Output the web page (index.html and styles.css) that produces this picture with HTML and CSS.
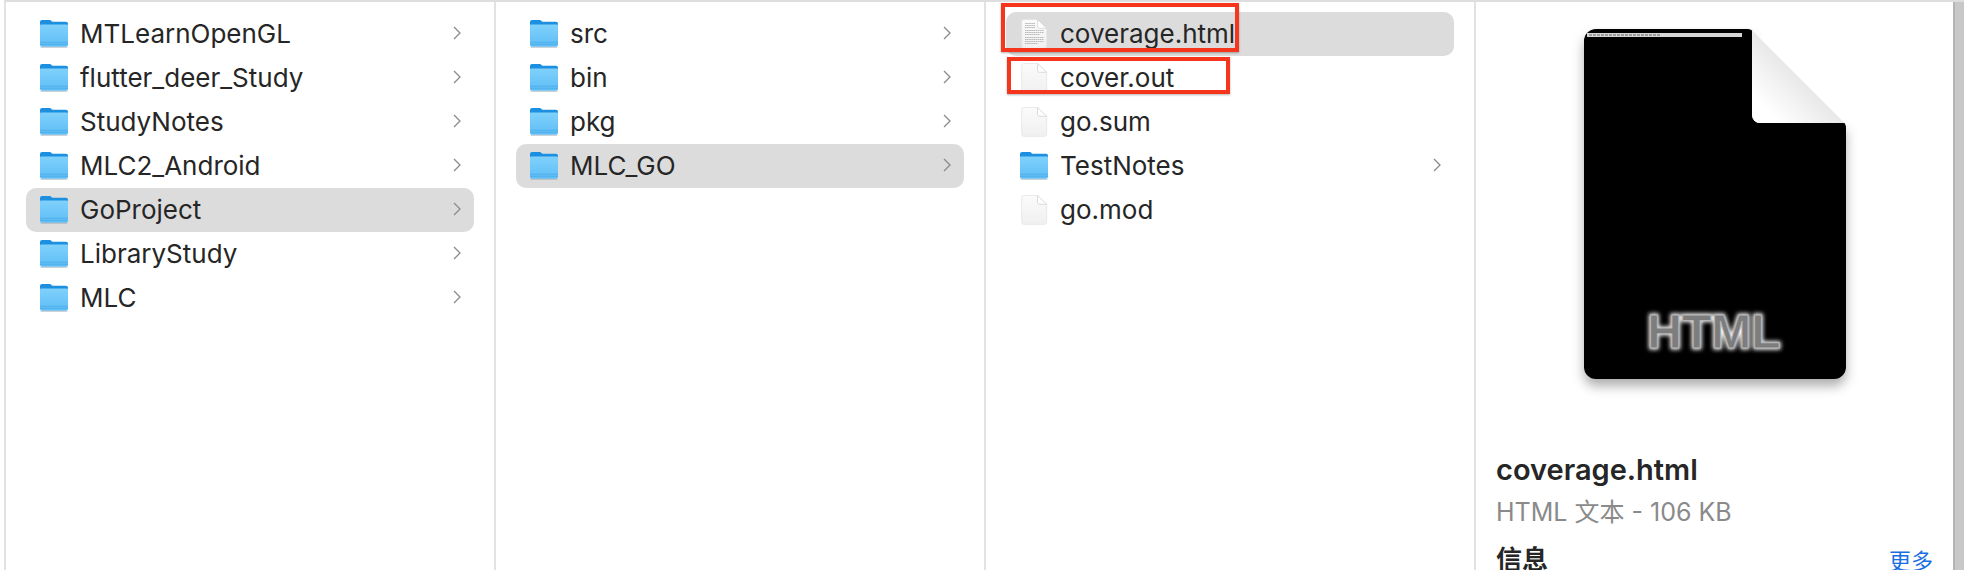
FILE: index.html
```html
<!DOCTYPE html>
<html lang="zh">
<head>
  <meta charset="UTF-8">
  <title>Finder</title>
  <link rel="stylesheet" href="styles.css">
</head>
<body>
  <svg class="sprites" width="0" height="0">
    <defs>
      <linearGradient id="folder-front" x1="0" y1="0" x2="0" y2="1">
        <stop offset="0" stop-color="#80d1fb"/>
        <stop offset="1" stop-color="#5dbdf6"/>
      </linearGradient>
      <linearGradient id="doc-page" x1="0" y1="0" x2="0" y2="1">
        <stop offset="0" stop-color="#fbfbfb"/>
        <stop offset="1" stop-color="#f0f0f0"/>
      </linearGradient>
      <symbol id="folder" viewBox="0 0 30 30">
        <path d="M1 3a2 2 0 0 1 2-2h7.5c1 0 1.5.6 2.2 1.2.5.4 1 .6 1.7.6H27a2 2 0 0 1 2 2V10H1z" fill="#1d8fe0"/>
        <path d="M1 6.5a1 1 0 0 1 1-1h26a1 1 0 0 1 1 1v19.3a2 2 0 0 1-2 2H3a2 2 0 0 1-2-2z" fill="url(#folder-front)"/>
        <path d="M1 23.3h28M1 25.3h28" stroke="#4aa9e6" stroke-width=".7" fill="none"/>
        <path d="M1.5 28.3h27" stroke="#9aa4ab" stroke-width="1" fill="none" opacity=".6"/>
      </symbol>
      <symbol id="doc" viewBox="0 0 30 30">
        <path d="M4.7.5h13.8l9.2 9v17.8a2 2 0 0 1-2 2H4.7a2 2 0 0 1-2-2V2.500a2 2 0 0 1 2-2z" fill="url(#doc-page)" stroke="#e2e2e2" stroke-width=".7"/>
        <path d="M18.500.5v6.800a2 2 0 0 0 2 2h7.200z" fill="#fff" stroke="#cfcfcf" stroke-width=".7"/>
      </symbol>
      <symbol id="doc-html" viewBox="0 0 30 30">
        <path d="M4.7.5h13.8l9.2 9v17.8a2 2 0 0 1-2 2H4.7a2 2 0 0 1-2-2V2.500a2 2 0 0 1 2-2z" fill="url(#doc-page)" stroke="#e2e2e2" stroke-width=".7"/>
        <path d="M18.500.5v6.800a2 2 0 0 0 2 2h7.200z" fill="#fff" stroke="#cfcfcf" stroke-width=".7"/>
        <path d="M6 4.500h10M6 6.500h10M6 8.500h10M6 11.500h19M6 13.500h19M6 15.500h15M6 18.500h19M6 20.500h19M6 22.500h19M6 24.500h13" stroke="#a8a8a8" stroke-width=".8" stroke-dasharray="1.600 .5" fill="none"/>
      </symbol>
      <symbol id="chevron" viewBox="0 0 8 14">
        <path d="M1 1l6 6-6 6" fill="none" stroke="#8a8a8a" stroke-width="1.300"/>
      </symbol>
    </defs>
  </svg>

  <div class="browser">
    <div class="column">
      <div class="row"><svg class="icon"><use href="#folder"/></svg><span class="name">MTLearnOpenGL</span><svg class="chevron"><use href="#chevron"/></svg></div>
      <div class="row"><svg class="icon"><use href="#folder"/></svg><span class="name">flutter_deer_Study</span><svg class="chevron"><use href="#chevron"/></svg></div>
      <div class="row"><svg class="icon"><use href="#folder"/></svg><span class="name">StudyNotes</span><svg class="chevron"><use href="#chevron"/></svg></div>
      <div class="row"><svg class="icon"><use href="#folder"/></svg><span class="name">MLC2_Android</span><svg class="chevron"><use href="#chevron"/></svg></div>
      <div class="row selected"><svg class="icon"><use href="#folder"/></svg><span class="name">GoProject</span><svg class="chevron"><use href="#chevron"/></svg></div>
      <div class="row"><svg class="icon"><use href="#folder"/></svg><span class="name">LibraryStudy</span><svg class="chevron"><use href="#chevron"/></svg></div>
      <div class="row"><svg class="icon"><use href="#folder"/></svg><span class="name">MLC</span><svg class="chevron"><use href="#chevron"/></svg></div>
    </div>
    <div class="column">
      <div class="row"><svg class="icon"><use href="#folder"/></svg><span class="name">src</span><svg class="chevron"><use href="#chevron"/></svg></div>
      <div class="row"><svg class="icon"><use href="#folder"/></svg><span class="name">bin</span><svg class="chevron"><use href="#chevron"/></svg></div>
      <div class="row"><svg class="icon"><use href="#folder"/></svg><span class="name">pkg</span><svg class="chevron"><use href="#chevron"/></svg></div>
      <div class="row selected"><svg class="icon"><use href="#folder"/></svg><span class="name">MLC_GO</span><svg class="chevron"><use href="#chevron"/></svg></div>
    </div>
    <div class="column">
      <div class="row selected"><svg class="icon"><use href="#doc-html"/></svg><span class="name">coverage.html</span></div>
      <div class="row"><svg class="icon"><use href="#doc"/></svg><span class="name">cover.out</span></div>
      <div class="row"><svg class="icon"><use href="#doc"/></svg><span class="name">go.sum</span></div>
      <div class="row"><svg class="icon"><use href="#folder"/></svg><span class="name">TestNotes</span><svg class="chevron"><use href="#chevron"/></svg></div>
      <div class="row"><svg class="icon"><use href="#doc"/></svg><span class="name">go.mod</span></div>
      <div class="mark mark-one"></div>
      <div class="mark mark-two"></div>
    </div>
    <div class="preview">
      <svg class="thumb" width="290" height="380" viewBox="0 0 290 380">
        <defs>
          <linearGradient id="fold" x1="1" y1="0" x2="0" y2="1">
            <stop offset=".3" stop-color="#c8c8c8"/>
            <stop offset=".5" stop-color="#e8e8e8"/>
            <stop offset=".85" stop-color="#fff"/>
          </linearGradient>
          <filter id="page-shadow" x="-15%" y="-10%" width="130%" height="125%">
            <feDropShadow dx="0" dy="7" stdDeviation="6" flood-color="#000" flood-opacity=".32"/>
          </filter>
          <filter id="glow" x="-20%" y="-40%" width="140%" height="180%">
            <feGaussianBlur stdDeviation="2"/>
          </filter>
        </defs>
        <path d="M26 2h150c2.500 0 4.500.4 6 1.500V88a8 8 0 0 0 8 8h84.500c1 1.500 1.500 3 1.500 5v239a12 12 0 0 1-12 12H26a12 12 0 0 1-12-12V14A12 12 0 0 1 26 2z" fill="#000" filter="url(#page-shadow)"/>
        <path d="M182 3.500l92.500 92.500H190a8 8 0 0 1-8-8z" fill="url(#fold)"/>
        <rect x="17" y="6" width="155" height="4" fill="#d6d6d6"/>
        <path d="M19 8h72" stroke="#8c8c8c" stroke-width="1.500" stroke-dasharray="3 1"/>
        <text class="thumb-label glow" x="144" y="321" text-anchor="middle" filter="url(#glow)">HTML</text>
        <text class="thumb-label" x="144" y="321" text-anchor="middle">HTML</text>
      </svg>
      <div class="file-name">coverage.html</div>
      <div class="file-kind">HTML 文本 - 106 KB</div>
      <div class="info-head">
        <span class="info-title">信息</span>
        <span class="info-more">更多</span>
      </div>
    </div>
    <div class="edge"></div>
  </div>
</body>
</html>
```

FILE: styles.css
```css
html, body {
  margin: 0;
  padding: 0;
  height: 570px;
  overflow: hidden;
  background-color: #fff;
}
body {
  font-family: Inter, "Noto Sans CJK SC", sans-serif;
  color: #262626;
}
.sprites {
  position: absolute;
}
.browser {
  display: flex;
  height: 568px;
  margin-left: 4px;
  border-top: 2px solid #dedede;
  border-left: 2px solid #e2e2e2;
}
.column {
  position: relative;
  flex-shrink: 0;
  width: 490px;
  box-sizing: border-box;
  padding: 10px 20px 0;
  border-right: 2px solid #e2e2e2;
}
.row {
  display: flex;
  align-items: center;
  height: 44px;
  padding-left: 13px;
  padding-right: 13px;
  border-radius: 10px;
  font-size: 26px;
}
.row.selected {
  background-color: #dcdcdc;
}
.icon {
  width: 30px;
  height: 30px;
  margin-right: 11px;
  flex-shrink: 0;
}
.name {
  flex: 1;
  white-space: nowrap;
  margin-bottom: 2px;
}
.chevron {
  width: 8px;
  height: 14px;
  margin-bottom: 2px;
}
.mark {
  position: absolute;
  box-sizing: border-box;
  border: 4px solid #f6361c;
  box-shadow: 0 1px 2px rgba(0, 0, 0, 0.3);
}
.mark-one {
  left: 15px;
  top: 1px;
  width: 238px;
  height: 49px;
}
.mark-two {
  left: 21px;
  top: 55px;
  width: 223px;
  height: 37px;
}
.preview {
  flex: 1;
  display: flex;
  flex-direction: column;
  padding: 0 20px;
  overflow: hidden;
}
.thumb {
  align-self: center;
  margin-top: 25px;
  flex-shrink: 0;
}
.thumb-label {
  font-family: "Liberation Sans", sans-serif;
  font-size: 48px;
  font-weight: 700;
  fill: #7d7d7d;
  stroke: #b5b5b5;
  stroke-width: 1;
}
.thumb-label.glow {
  fill: #fff;
  stroke: #fff;
  stroke-width: 3;
}
.file-name {
  margin-top: 46px;
  font-size: 29px;
  font-weight: 600;
  line-height: 34px;
}
.file-kind {
  margin-top: 10px;
  font-size: 25px;
  line-height: 30px;
  color: #8a8a8a;
}
.info-head {
  display: flex;
  justify-content: space-between;
  align-items: baseline;
  margin-top: 17px;
  line-height: 32px;
}
.info-title {
  font-size: 26px;
  font-weight: 600;
}
.info-more {
  font-size: 22px;
  color: #1a6fe0;
}
.edge {
  width: 9px;
  flex-shrink: 0;
  border-left: 2px solid #b4b4b4;
  background-color: #c8c8c8;
}
```
